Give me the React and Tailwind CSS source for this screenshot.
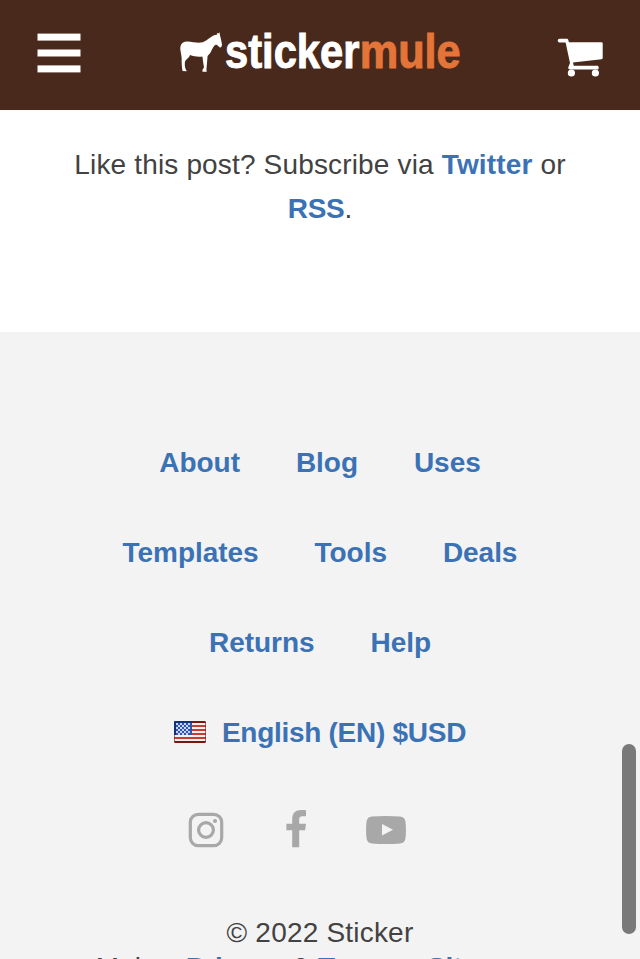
const linkClass = "font-bold text-[#3b72b5]";

function MenuIcon() {
  return (
    <svg className="h-[40px] w-[44px]" viewBox="0 0 44 40" fill="#fff" aria-label="Menu">
      <rect x=".5" y=".6" width="43" height="7" />
      <rect x=".5" y="16.5" width="43" height="7" />
      <rect x=".5" y="32.4" width="43" height="7" />
    </svg>
  );
}

function Logo() {
  return (
    <svg className="h-[50px] w-[284px] overflow-visible" viewBox="178 28 284 50" role="img" aria-label="stickermule">
      <path
        fill="#fff"
        d="M180.4 50 C179.8 45 182 41.9 186.5 41.4 C192 41.2 196 43.2 201 42.6 C206 41.8 208.5 38.4 213 35.8 C214.5 34.9 216 34.6 217.4 34.4 L216.8 32.8 L218.6 33.6 L219.6 32.2 L220 35.4 C220.8 38 221.4 41 222 44.6 C222.2 46.4 221 47.8 219.8 47.4 C218.8 46.8 218 45 216 44.4 C213.4 45.6 212.4 49 211 51.4 C210.2 53.6 208.6 54.6 207.6 56 L207 63 L206.4 69.4 L206.8 71.7 L202.4 71.7 L202.6 69.4 L204 67.5 C203.4 64 202.8 60 202.4 56.4 C198.5 57.2 194 56.4 190 55 C189.6 57.4 186.2 59.2 185 61.4 C184.6 64 184.8 66.8 185.6 69 L186.8 71.2 L182.6 71 C181.8 68 181.8 65 181.6 61 C182 58 181.2 55 180.9 53 Z"
      />
      <g fontSize="47.5" fontWeight="700" fontFamily="'Liberation Sans', Arial, sans-serif" strokeWidth="1">
        <text x="225" y="68.4" textLength="134.5" lengthAdjust="spacingAndGlyphs" fill="#fff" stroke="#fff">sticker</text>
        <text x="359.7" y="68.4" textLength="101" lengthAdjust="spacingAndGlyphs" fill="#e57439" stroke="#e57439">mule</text>
      </g>
    </svg>
  );
}

function CartIcon() {
  return (
    <svg className="h-[40px] w-[46px]" viewBox="557 38 46 40" fill="#fff" aria-label="Cart">
      <path d="M559.5 38.7 H566.5 C567.5 38.7 568 39.2 568.3 40 L568.9 42.2 H601.5 Q602.7 42.2 602.7 43.4 V58 Q602.7 59 601.6 59.2 L573 62.6 L573.7 65.8 H597.5 Q598.7 65.8 598.7 67.7 Q598.7 69.6 597.5 69.6 H570 Q568 69.6 568.2 67.5 L570 63 L565.6 42.4 H559.5 Q557.7 42.4 557.7 40.5 Q557.7 38.7 559.5 38.7 Z" />
      <circle cx="571.4" cy="73" r="3.6" />
      <circle cx="595.4" cy="73" r="3.6" />
    </svg>
  );
}

function Flag() {
  const stars = [];
  for (let r = 0; r < 6; r++)
    for (let c = 0; c < 7; c++)
      if ((r + c) % 2 === 0) stars.push(<rect key={`${r}-${c}`} x={2 + c * 2} y={2 + r * 2} width="2" height="2" />);
  return (
    <svg className="h-[22px] w-[32px]" viewBox="0 0 32 22" aria-hidden="true">
      <rect width="32" height="22" rx="1.5" fill="#f3f0f0" />
      <path fill="#cc3b31" d="M0 4h32v2H0z M0 8h32v2H0z M0 12h32v2H0z M0 16h32v2H0z" />
      <path fill="#7d1511" d="M1 0h30l1 1v1H0V1z M0 20h32v1l-1 1H1l-1-1z" />
      <path fill="#2d55b4" d="M0 1 1 0h17v14H0z" />
      <path fill="#133176" d="M0 1 1 0h17v2H2V14H0z" />
      <g fill="#cad6ef">{stars}</g>
      <path fill="none" stroke="#642622" strokeOpacity=".6" d="M.5 14v7 M31.5 1v20" />
    </svg>
  );
}

function SocialLinks() {
  return (
    <div className="mt-[62px] flex h-[40px] items-center pl-[188px]">
      <svg className="h-[36px] w-[36px]" viewBox="0 0 36 36" aria-label="Instagram">
        <rect x="2.3" y="2.3" width="31.4" height="31.4" rx="8" fill="none" stroke="#a8a8a8" strokeWidth="3.2" />
        <circle cx="18" cy="18" r="7.4" fill="none" stroke="#a8a8a8" strokeWidth="3.2" />
        <circle cx="27" cy="9" r="2.1" fill="#a8a8a8" />
      </svg>
      <svg className="ml-[62px] h-[38px] w-[20px] -translate-y-px" viewBox="286 810 20 38" fill="#a8a8a8" aria-label="Facebook">
        <path d="M292.2 847.3 V830.3 H286.4 V823.8 H292.2 V819 C292.2 813.2 295.8 810 301.2 810 C303.7 810 305.2 810.1 306 810.2 V816.2 H302.4 C299.8 816.2 299.2 817.6 299.2 819.4 V823.8 H306 L305.1 830.3 H299.2 V847.3 Z" />
      </svg>
      <svg className="ml-[60px] h-[28px] w-[40px]" viewBox="0 0 40 28" aria-label="YouTube">
        <path fill="#a8a8a8" d="M6 .5 Q20-.5 34 .5 Q39 .8 39.5 6 Q40.4 14 39.5 22 Q39 27.2 34 27.5 Q20 28.5 6 27.5 Q1 27.2.5 22 Q-.4 14 .5 6 Q1 .8 6 .5Z" />
        <path fill="#f3f3f3" d="M16 8 27 13.8 16 19.6z" />
      </svg>
    </div>
  );
}

function LinkRow({ items }) {
  return (
    <div className="flex h-[90px] items-center justify-center gap-14">
      {items.map((item) => (
        <a key={item} className={`${linkClass} tracking-[-0.05px]`}>{item}</a>
      ))}
    </div>
  );
}

export default function App() {
  return (
    <div className="relative h-[959px] w-[640px] overflow-hidden bg-white font-['Liberation_Sans',Arial,sans-serif] text-[28px] leading-[44px] text-[#424242]">
      <header className="flex h-[110px] items-start bg-[#48291b]">
        <div className="ml-[37px] mt-[33px] flex">
          <MenuIcon />
        </div>
        <div className="ml-[97px] mt-[28px] flex">
          <Logo />
        </div>
        <div className="ml-[95px] mt-[38px] flex">
          <CartIcon />
        </div>
      </header>

      <main className="h-[222px] pt-[33px] text-center">
        <p>
          <span className="tracking-[0.16px]">
            Like this post? Subscribe via <a className={linkClass}>Twitter</a> or
          </span>
          <br />
          <a className={`${linkClass} tracking-[-0.3px]`}>RSS</a>.
        </p>
      </main>

      <footer className="h-[627px] overflow-hidden bg-[#f3f3f3] pt-[86px]">
        <LinkRow items={["About", "Blog", "Uses"]} />
        <LinkRow items={["Templates", "Tools", "Deals"]} />
        <LinkRow items={["Returns", "Help"]} />
        <div className="mt-[30px] flex h-[30px] items-center justify-center gap-4">
          <div className="flex -translate-y-px">
            <Flag />
          </div>
          <a className={`${linkClass} tracking-[-0.28px]`}>English (EN) $USD</a>
        </div>
        <SocialLinks />
        <div className="mt-[66px] text-center leading-[34px]">
          <p className="tracking-[0.2px]">© 2022 Sticker</p>
          <p className="whitespace-nowrap pr-[10px] pt-px">
            Mule<span className="px-[2px]"> • </span><a className={`${linkClass} tracking-[-0.25px]`}>Privacy</a> &amp; <a className={`${linkClass} tracking-[-0.25px]`}>Terms</a><span className="px-[1.5px]"> • </span><a className={`${linkClass} tracking-[-0.25px]`}>Sitemap</a>
          </p>
        </div>
      </footer>

      <div className="absolute left-[622px] top-[744px] h-[190px] w-[14px] rounded-full bg-[#797979]" />
    </div>
  );
}
